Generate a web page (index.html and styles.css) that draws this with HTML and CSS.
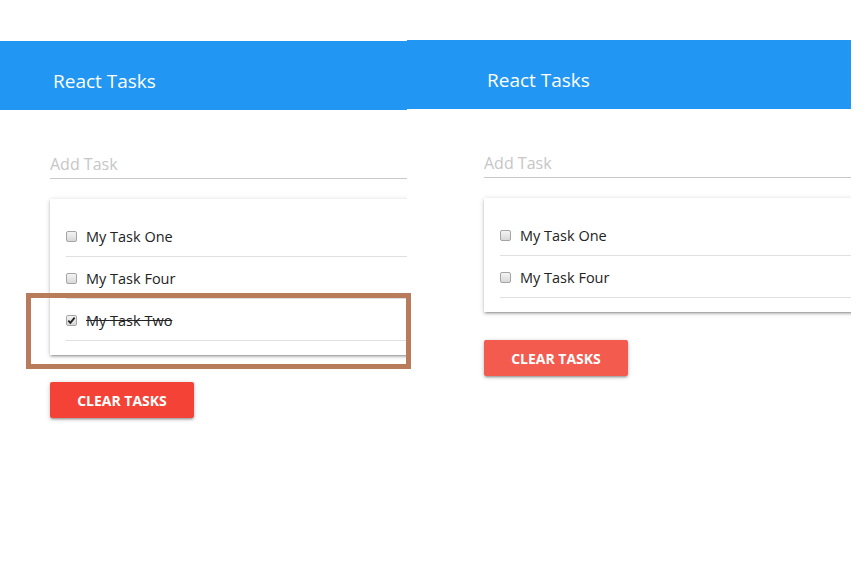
FILE: index.html
```html
<!DOCTYPE html>
<html lang="en">
<head>
<meta charset="utf-8">
<title>React Tasks</title>
<link rel="stylesheet" href="styles.css">
</head>
<body>
<div class="screens">
  <section class="panel panel-left">
    <header class="bar"><h1 class="bar-title">React Tasks</h1></header>
    <div class="content">
      <input class="field" type="text" placeholder="Add Task">
      <div class="card">
        <ul class="tasks">
          <li class="task"><span class="box"></span><span class="label">My Task One</span></li>
          <li class="task"><span class="box"></span><span class="label">My Task Four</span></li>
          <li class="task done"><span class="box checked"><svg viewBox="0 0 11 11" width="11" height="11"><path d="M2.3 5.6 L4.4 7.8 L8.6 2.6" fill="none" stroke="#222" stroke-width="1.8"/></svg></span><span class="label">My Task Two</span></li>
        </ul>
      </div>
      <button class="btn" type="button">CLEAR TASKS</button>
    </div>
  </section>
  <section class="panel panel-right">
    <header class="bar"><h1 class="bar-title">React Tasks</h1></header>
    <div class="content">
      <input class="field" type="text" placeholder="Add Task">
      <div class="card">
        <ul class="tasks">
          <li class="task"><span class="box"></span><span class="label">My Task One</span></li>
          <li class="task"><span class="box"></span><span class="label">My Task Four</span></li>
        </ul>
      </div>
      <button class="btn btn-hover" type="button">CLEAR TASKS</button>
    </div>
  </section>
  <div class="highlight"></div>
</div>
</body>
</html>
```
FILE: styles.css
```css
* { box-sizing: border-box; }
html, body {
  margin: 0;
  padding: 0;
  background: #fff;
  font-family: "Open Sans", "Noto Sans", sans-serif;
  color: #222;
}
.screens {
  position: relative;
  display: flex;
  align-items: flex-start;
  width: 864px;
  height: 578px;
}
.panel {
  overflow: hidden;
  flex: none;
  padding-bottom: 20px;
}
.panel-left { width: 407px; margin-top: 41px; }
.panel-right { width: 444px; margin-top: 40px; }

.bar {
  height: 69px;
  background: #2196f3;
  padding-top: 27px;
}
.bar-title {
  margin: 0;
  font-size: 19px;
  line-height: 26px;
  font-weight: 400;
  color: #fff;
}
.panel-left .bar { padding-left: 53px; }
.panel-right .bar { padding-left: 80px; }

.content {
  display: flex;
  flex-direction: column;
  align-items: flex-start;
  width: 480px;
}
.panel-left .content { padding-left: 50px; }
.panel-right .content { padding-left: 77px; }

.field {
  display: block;
  width: 100%;
  height: 29px;
  margin: 40px 0 0;
  padding: 0;
  border: none;
  border-bottom: 1px solid #c9c9c9;
  outline: none;
  font-family: inherit;
  font-size: 16px;
  background: transparent;
}
.field::placeholder { color: #c6c6c6; }

.card {
  width: 100%;
  margin-top: 20px;
  background: #fff;
  padding: 16px 0 14px 16px;
  box-shadow: 0 2px 2px 0 rgba(0,0,0,.14), 0 3px 1px -2px rgba(0,0,0,.12), 0 1px 5px 0 rgba(0,0,0,.2);
}
.tasks {
  list-style: none;
  margin: 0;
  padding: 0;
}
.task {
  display: flex;
  align-items: center;
  height: 42px;
  padding-top: 1px;
  border-bottom: 1px solid #e0e0e0;
  font-size: 14.5px;
  color: #222;
}
.box {
  flex: none;
  width: 11px;
  height: 11px;
  margin-right: 9px;
  border: 1px solid #a5a5a5;
  border-radius: 2px;
  background: linear-gradient(#f4f4f4, #d8d8d8);
  position: relative;
}
.box svg {
  position: absolute;
  left: -1px;
  top: -1px;
}
.done .label { text-decoration: line-through; }

.btn {
  margin-top: 27px;
  width: 144px;
  height: 36px;
  border: none;
  border-radius: 2px;
  background: #f44336;
  color: #fff;
  font-family: inherit;
  font-size: 14px;
  font-weight: 700;
  padding: 0;
  box-shadow: 0 2px 2px 0 rgba(0,0,0,.14), 0 3px 1px -2px rgba(0,0,0,.12), 0 1px 5px 0 rgba(0,0,0,.2);
}
.btn-hover { background: #f45b4f; margin-top: 28px; }

.highlight {
  position: absolute;
  left: 26px;
  top: 293px;
  width: 385px;
  height: 76px;
  border: 5px solid #b87b5b;
  pointer-events: none;
}
```
